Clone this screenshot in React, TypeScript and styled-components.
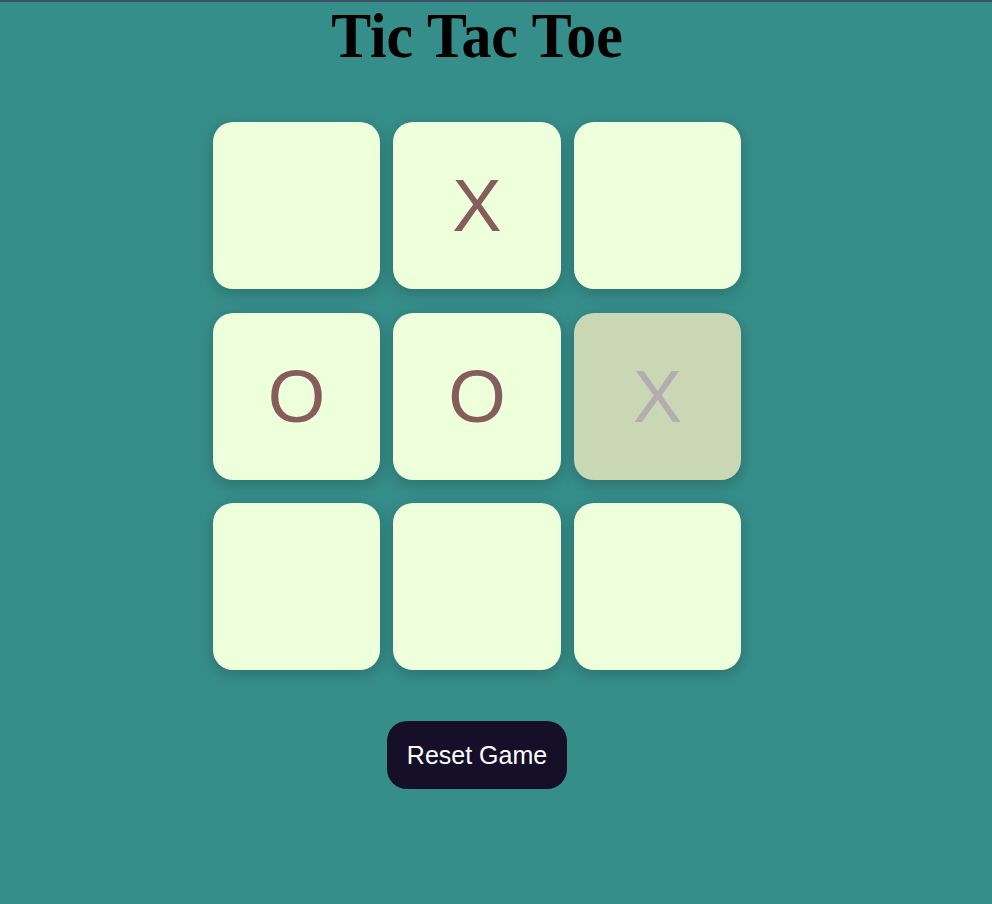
import React, { useState } from "react";
import styled, { createGlobalStyle } from "styled-components";

const GlobalStyle = createGlobalStyle`
  html, body {
    margin: 0;
    padding: 0;
    background: #368e8a;
  }
  body {
    border-top: 2px solid #3f5169;
    min-height: 902px;
    font-family: "Liberation Sans", Arial, sans-serif;
  }
`;

const Page = styled.div`
  width: 954px;
  display: flex;
  flex-direction: column;
  align-items: center;
`;

const Title = styled.h1`
  margin: 0;
  font-family: "Liberation Serif", "Times New Roman", serif;
  font-weight: bold;
  font-size: 64px;
  line-height: 68px;
  color: #000;
  transform: scaleX(0.935);
`;

const Board = styled.div`
  margin-top: 52px;
  display: grid;
  grid-template-columns: repeat(3, 167.5px);
  grid-auto-rows: 167px;
  column-gap: 13px;
  row-gap: 23.5px;
`;

const Cell = styled.button<{ $dim?: boolean }>`
  border: none;
  padding: 0;
  border-radius: 20px;
  background: ${(p) => (p.$dim ? "#c9d7b4" : "#eeffdc")};
  color: ${(p) => (p.$dim ? "#b4acb1" : "#875c5d")};
  box-shadow: 0 4px 16px rgba(0, 0, 0, 0.22);
  font-family: "Liberation Sans", Arial, sans-serif;
  font-size: 74px;
  display: flex;
  align-items: center;
  justify-content: center;
  cursor: pointer;
`;

const ResetButton = styled.button`
  margin-top: 51px;
  border: none;
  border-radius: 20px;
  background: #150f2a;
  color: #fff;
  font-family: "Liberation Sans", Arial, sans-serif;
  font-size: 25px;
  padding: 20px 20px;
  line-height: 28px;
  cursor: pointer;
`;

const initial = ["", "X", "", "O", "O", "X", "", "", ""];

export default function App() {
  const [cells, setCells] = useState<string[]>(initial);

  return (
    <>
      <GlobalStyle />
      <Page>
        <Title>Tic Tac Toe</Title>
        <Board>
          {cells.map((v, i) => (
            <Cell key={i} $dim={i === 5}>
              {v}
            </Cell>
          ))}
        </Board>
        <ResetButton onClick={() => setCells(Array(9).fill(""))}>
          Reset Game
        </ResetButton>
      </Page>
    </>
  );
}
